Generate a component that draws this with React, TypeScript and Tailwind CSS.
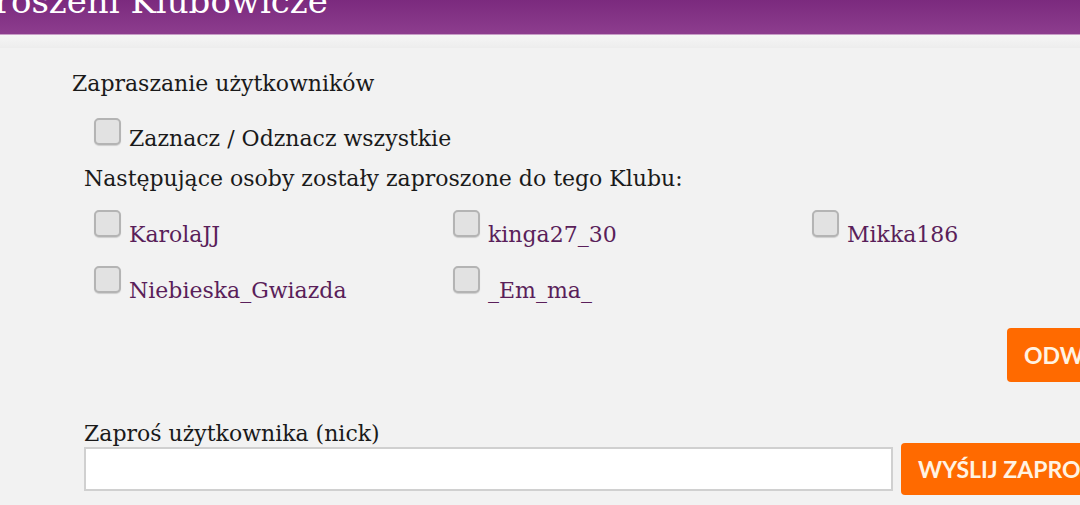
import React from "react";

const invited = [
  ["KarolaJJ", "kinga27_30", "Mikka186"],
  ["Niebieska_Gwiazda", "_Em_ma_"],
];

function Box() {
  return (
    <span className="inline-block w-[27px] h-[27px] shrink-0 rounded-[5px] border-2 border-[#b4b4b4] bg-[#e2e2e2] shadow-[0_1px_1px_rgba(0,0,0,0.15)]" />
  );
}

export default function App() {
  return (
    <div
      className="w-[1080px] h-[505px] overflow-hidden bg-[#f2f2f2] text-[#1a1a1a]"
      style={{ fontFamily: '"DejaVu Serif", "Liberation Serif", serif' }}
    >
      {/* header */}
      <div className="h-[35px] overflow-hidden bg-gradient-to-b from-[#7b2a7e] to-[#8d3d8e] border-b border-[#c79ec6]">
        <div className="-mt-[21px] -ml-[71px] whitespace-nowrap text-[34px] leading-[44px] text-white">
          Zaproszeni Klubowicze
        </div>
      </div>
      <div className="h-[13px] bg-gradient-to-b from-[#f6f6f6] to-[#ededed]" />

      <div className="pl-[72px] pt-[22px]">
        <div className="text-[22px] leading-[28px]">Zapraszanie użytkowników</div>

        <div className="ml-[22px] mt-[20px] flex items-start gap-[8px]">
          <Box />
          <span className="mt-[7px] text-[22px] leading-[28px]">Zaznacz / Odznacz wszystkie</span>
        </div>

        <div className="ml-[12px] mt-[12px] text-[22px] leading-[28px]">
          Następujące osoby zostały zaproszone do tego Klubu:
        </div>

        <div className="ml-[22px] mt-[17px] flex flex-col gap-[17px]">
          {invited.map((row, i) => (
            <div key={i} className="flex">
              {row.map((name) => (
                <div key={name} className="w-[359px] shrink-0 flex items-start gap-[8px]">
                  <Box />
                  <span className="mt-[11px] text-[22px] leading-[28px] text-[#5a1f5a]">{name}</span>
                </div>
              ))}
            </div>
          ))}
        </div>

        <div className="mt-[23px] flex justify-end -mr-[82px]">
          <button
            className="h-[54px] w-[155px] shrink-0 rounded-[4px] bg-[#ff6a00] pl-[17px] text-left text-[23px] font-bold text-[#fff3e3]"
            style={{ fontFamily: "Lato, sans-serif" }}
          >
            ODWOŁAJ
          </button>
        </div>

        <div className="ml-[12px] mt-[38px] text-[22px] leading-[28px]">Zaproś użytkownika (nick)</div>
        <div className="ml-[12px] -mt-[5px] flex items-center gap-[8px]">
          <input className="h-[44px] w-[809px] shrink-0 border-2 border-[#d0d0d0] bg-white outline-none" />
          <button
            className="h-[52px] w-[280px] shrink-0 rounded-[4px] bg-[#ff6a00] pl-[17px] text-left text-[23px] font-bold text-[#fff3e3]"
            style={{ fontFamily: "Lato, sans-serif" }}
          >
            WYŚLIJ ZAPROSZENIE
          </button>
        </div>
      </div>
    </div>
  );
}
